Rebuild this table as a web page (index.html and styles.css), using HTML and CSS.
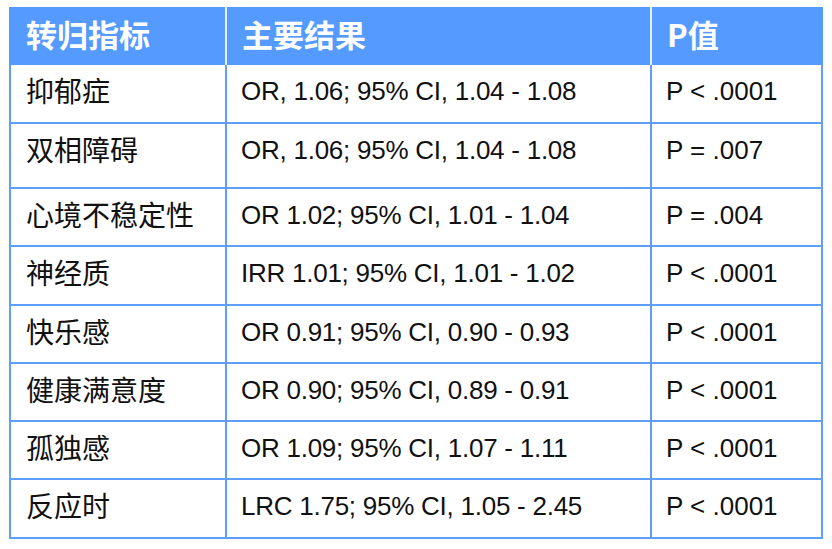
FILE: index.html
```html
<!DOCTYPE html>
<html lang="zh">
<head>
<meta charset="utf-8">
<link rel="stylesheet" href="styles.css">
</head>
<body>
<div class="table">
  <div class="th">转归指标</div>
  <div class="th">主要结果</div>
  <div class="th last">P值</div>

  <div class="td first">抑郁症</div>
  <div class="td res">OR, 1.06; 95% CI, 1.04 - 1.08</div>
  <div class="td">P &lt; .0001</div>

  <div class="td first">双相障碍</div>
  <div class="td res">OR, 1.06; 95% CI, 1.04 - 1.08</div>
  <div class="td">P = .007</div>

  <div class="td first">心境不稳定性</div>
  <div class="td res">OR 1.02; 95% CI, 1.01 - 1.04</div>
  <div class="td">P = .004</div>

  <div class="td first">神经质</div>
  <div class="td res">IRR 1.01; 95% CI, 1.01 - 1.02</div>
  <div class="td">P &lt; .0001</div>

  <div class="td first">快乐感</div>
  <div class="td res">OR 0.91; 95% CI, 0.90 - 0.93</div>
  <div class="td">P &lt; .0001</div>

  <div class="td first">健康满意度</div>
  <div class="td res">OR 0.90; 95% CI, 0.89 - 0.91</div>
  <div class="td">P &lt; .0001</div>

  <div class="td first">孤独感</div>
  <div class="td res">OR 1.09; 95% CI, 1.07 - 1.11</div>
  <div class="td">P &lt; .0001</div>

  <div class="td first">反应时</div>
  <div class="td res">LRC 1.75; 95% CI, 1.05 - 2.45</div>
  <div class="td">P &lt; .0001</div>
</div>
</body>
</html>
```
FILE: styles.css
```css
html, body {
  margin: 0;
  padding: 0;
  background: #ffffff;
}
body {
  padding: 7px 0 0 9px;
  font-family: "Liberation Sans", "Noto Sans CJK SC", sans-serif;
  color: #111111;
}
.table {
  display: grid;
  grid-template-columns: 218px 425px 171px;
  grid-template-rows: 58px 59px 65px 58px 59px 58px 58px 58px 59px;
  width: 814px;
}
.th {
  box-sizing: border-box;
  background: #559bff;
  color: #ffffff;
  font-family: "Noto Sans CJK SC", sans-serif;
  font-weight: 700;
  font-size: 31px;
  line-height: 40px;
  padding: 7px 0 0 15px;
  border-right: 2px solid #e8f1ff;
}
.th:first-child {
  padding-left: 17px;
}
.th.last {
  border-right: 2px solid #559bff;
}
.td {
  box-sizing: border-box;
  font-size: 26px;
  line-height: 30px;
  padding: 11px 0 0 14px;
  border-right: 2px solid #5e9ffc;
  border-bottom: 2px solid #5e9ffc;
  white-space: nowrap;
}
.td.res {
  letter-spacing: -0.25px;
}
.td.first {
  font-family: "Noto Sans CJK SC", sans-serif;
  font-size: 28px;
  padding: 10px 0 0 15px;
  border-left: 2px solid #5e9ffc;
}
```
